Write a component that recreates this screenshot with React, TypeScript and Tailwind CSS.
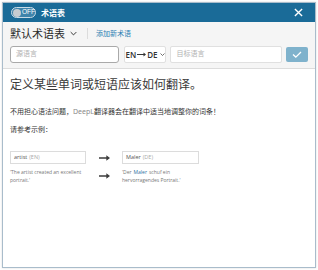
import React from 'react';

const CJK = "font-['Noto_Sans','Noto_Sans_CJK_SC',sans-serif]";

const Chevron = ({ className = '' }: { className?: string }) => (
  <svg className={className} viewBox="0 0 10 6" fill="none" stroke="currentColor" strokeWidth="1.4">
    <path d="M1 1l4 4 4-4" />
  </svg>
);

const Arrow = () => (
  <svg className="w-[11px] h-[6px] text-[#3c3c3c]" viewBox="0 0 12 6" fill="currentColor">
    <path d="M0 2.2h8V0L12 3 8 6V3.8H0z" />
  </svg>
);

const App = () => {
  return (
    <div className={`w-[318px] h-[270px] bg-white p-[2px] ${CJK}`}>
      <div className="w-full h-full flex flex-col border border-[#a9bccb] shadow-[0_0_2px_rgba(0,0,0,0.15)] bg-white">
        {/* header */}
        <div className="h-[19px] bg-[#1a6b98] flex items-center pl-[8px] pr-[8px]">
          <div className="flex items-center h-[11px] w-[25px] rounded-full border border-[#c9dbe6] bg-[#3f84ab] pl-[1px] gap-[1px]">
            <span className="w-[8px] h-[8px] rounded-full bg-[#c6ccd1]" />
            <span className="text-[6.5px] leading-none text-white font-['Liberation_Sans',sans-serif]">OFF</span>
          </div>
          <span className="ml-[5px] text-[8px] font-bold text-white leading-none">术语表</span>
          <svg className="ml-auto w-[9px] h-[9px] text-white mr-[4px]" viewBox="0 0 10 10" stroke="currentColor" strokeWidth="1.5">
            <path d="M1 1l8 8M9 1l-8 8" />
          </svg>
        </div>

        {/* toolbar */}
        <div className="bg-[#f5f5f5] border-b border-[#dcdcdc] px-[7px] pt-[3px] pb-[5px]">
          <div className="flex items-center h-[16px]">
            <span className="text-[11px] text-[#2a2a2a] leading-none">默认术语表</span>
            <Chevron className="ml-[5px] w-[7px] h-[5px] text-[#333]" />
            <span className="ml-[10px] h-[11px] w-px bg-[#dcdcdc]" />
            <span className="ml-[8px] text-[7px] text-[#2d7fb3] leading-none">添加新术语</span>
          </div>
          <div className="flex items-center mt-[5px] h-[17px]">
            <div className="w-[109px] h-[17px] bg-white border border-[#a9a9a9] rounded-[3px] flex items-center pl-[5px]">
              <span className="text-[7px] text-[#b2b2b2]">源语言</span>
            </div>
            <div className="ml-[5px] w-[43px] h-[17px] bg-white border border-[#e0e0e0] rounded-[2px] flex items-center justify-center font-['Open_Sans',sans-serif] text-[8px] font-semibold text-[#333]">
              <span>EN</span>
              <svg className="mx-[1px] w-[9px] h-[5px]" viewBox="0 0 9 5" fill="currentColor"><path d="M0 2.1h6.5V0.5L9 2.5 6.5 4.5V2.9H0z" /></svg>
              <span>DE</span>
              <Chevron className="ml-[2px] w-[5px] h-[3px]" />
            </div>
            <div className="ml-[4px] w-[112px] h-[17px] bg-white border border-[#e0e0e0] rounded-[2px] flex items-center pl-[5px]">
              <span className="text-[7px] text-[#b2b2b2]">目标语言</span>
            </div>
            <div className="ml-[4px] w-[22px] h-[15px] bg-[#7fb2cc] rounded-[2px] flex items-center justify-center">
              <svg className="w-[10px] h-[7px]" viewBox="0 0 10 7" fill="none" stroke="white" strokeWidth="1.3">
                <path d="M1 3.5l2.8 2.6L9 1" />
              </svg>
            </div>
          </div>
        </div>

        {/* body */}
        <div className="px-[7px] pt-[8px]">
          <p className="text-[12px] text-[#3a3a3a] leading-[16px]">定义某些单词或短语应该如何翻译。</p>
          <p className="mt-[14px] text-[7px] text-[#333] leading-[10px]">
            不用担心语法问题，<span className="text-[#8a8a8a]">DeepL</span>翻译器会在翻译中适当地调整你的词条！
          </p>
          <p className="mt-[8px] text-[7px] text-[#333] leading-[10px]">请参考示例：</p>

          <div className="mt-[16px] font-['Open_Sans',sans-serif]">
            <div className="flex items-center">
              <div className="w-[76px] h-[13px] border border-[#dcdcdc] flex items-center pl-[3px] text-[5.5px] text-[#555]">
                artist<span className="ml-[2px] text-[#aaa]">(EN)</span>
              </div>
              <div className="w-[36px] flex justify-center"><Arrow /></div>
              <div className="w-[77px] h-[13px] border border-[#dcdcdc] flex items-center pl-[3px] text-[5.5px] text-[#555]">
                Maler<span className="ml-[2px] text-[#aaa]">(DE)</span>
              </div>
            </div>
            <div className="flex items-center mt-[4px]">
              <div className="w-[80px] mr-[-4px] flex flex-col text-[5px] leading-[8px] text-[#777]">
                <span>'The artist created an excellent</span>
                <span>portrait.'</span>
              </div>
              <div className="w-[36px] flex justify-center"><Arrow /></div>
              <div className="w-[77px] flex flex-col text-[5px] leading-[8px] text-[#777]">
                <span className="flex gap-[2px]">
                  <span>'Der</span>
                  <span className="text-[#2d6fa0]">Maler</span>
                  <span>schuf ein</span>
                </span>
                <span>hervorragendes Portrait.'</span>
              </div>
            </div>
          </div>
        </div>
      </div>
    </div>
  );
};

export default App;
